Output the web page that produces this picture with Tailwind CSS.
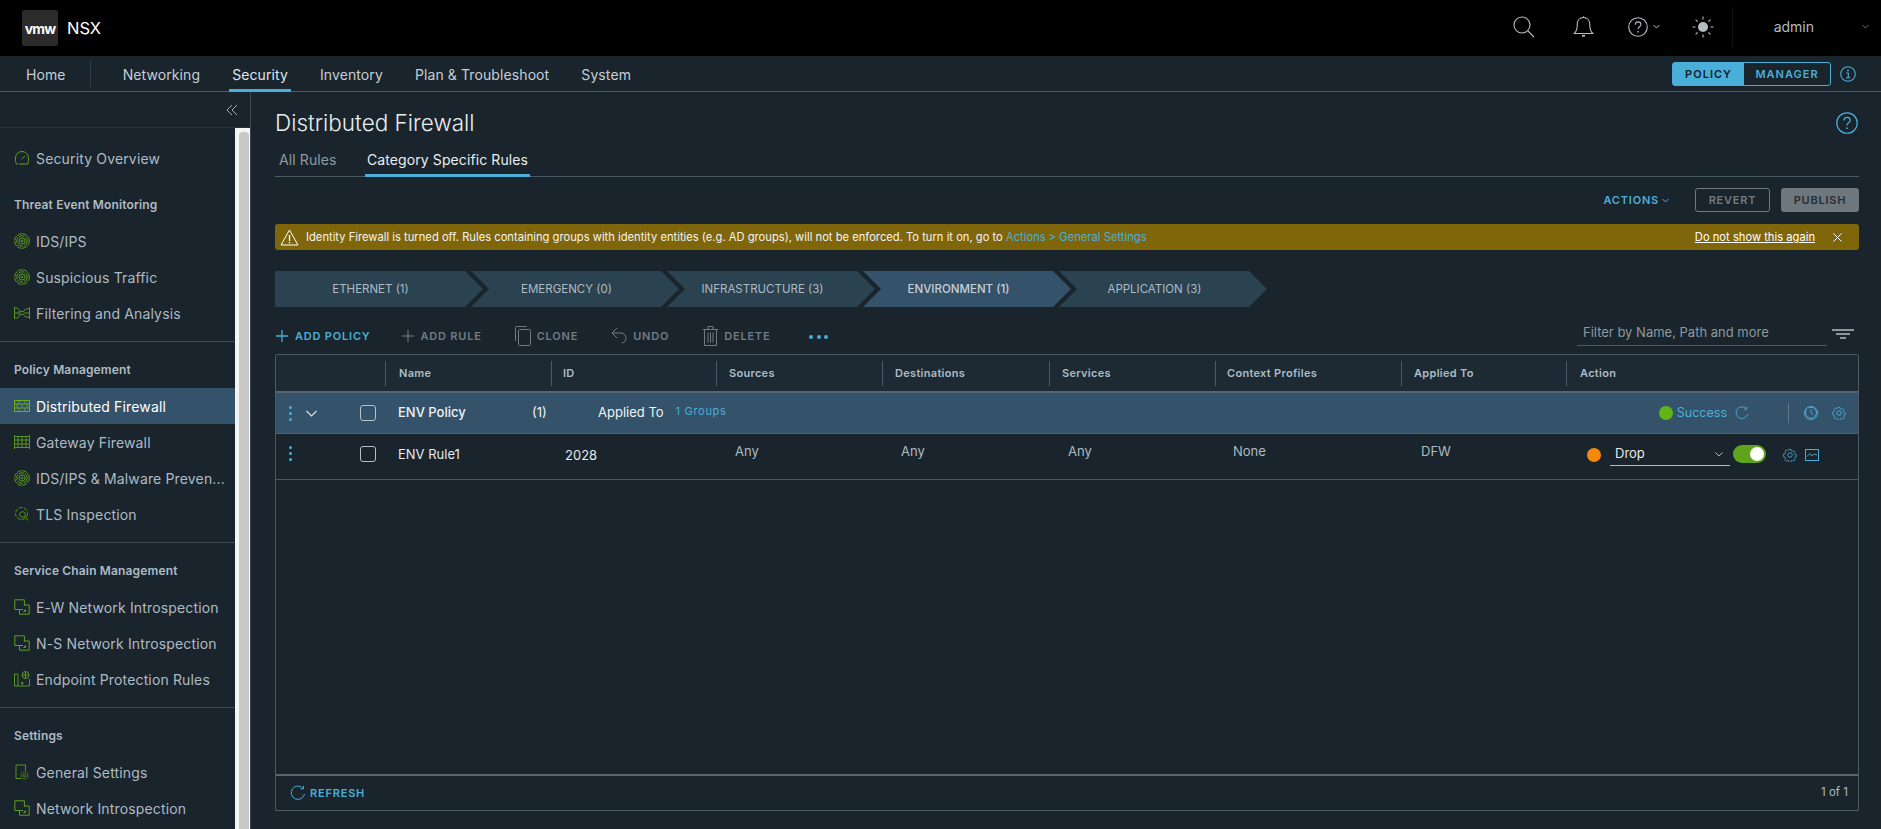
<!DOCTYPE html>
<html lang="en">
<head>
  <meta charset="UTF-8">
  <title>NSX - Distributed Firewall</title>
  <script src="https://cdn.jsdelivr.net/npm/@tailwindcss/browser@4"></script>
</head>
<body class="h-screen overflow-hidden bg-[#1a242c] text-[#adbbc4] [font-family:Inter,'Noto_Sans',sans-serif]">
  <!-- shared icons -->
  <svg class="hidden">
    <symbol id="intro" viewBox="0 0 16 16" fill="none" stroke="currentColor" stroke-width="1">
      <path d="M9 10.500H.8V.8h9.600v6"/><path d="M5.500 10.500v4.700h9.700V6H10.400"/><path d="M9.500 12.500l2-2M11.500 10.500v2h-2" stroke-width=".9"/>
    </symbol>
    <symbol id="rings" viewBox="0 0 16 16" fill="none" stroke="currentColor" stroke-width="1">
      <circle cx="8" cy="8" r="7.300" stroke-dasharray="5 .8"/><circle cx="8" cy="8" r="5.200" stroke-dasharray="6 .8"/><circle cx="8" cy="8" r="3.100"/><circle cx="8" cy="8" r="1"/>
    </symbol>
    <symbol id="gear" viewBox="0 0 16 16" fill="none" stroke="currentColor" stroke-width="1">
      <path d="M6.700.8h2.600l.4 2 1.300.6 1.800-1 1.800 1.900-1 1.700.5 1.300 2 .5v2.500l-2 .5-.5 1.300 1 1.700-1.800 1.900-1.800-1-1.300.6-.4 2H6.700l-.4-2-1.300-.6-1.800 1-1.800-1.900 1-1.700-.5-1.300-2-.5V6.800l2-.5.5-1.300-1-1.700L3.200 1.400l1.800 1 1.300-.6z" transform="translate(.8 .8) scale(.9)"/><circle cx="8" cy="8" r="2.600"/>
    </symbol>
    <symbol id="help" viewBox="0 0 20 20" fill="none" stroke="currentColor" stroke-width="1.100">
      <circle cx="10" cy="10" r="9.300"/><path d="M7.300 7.700c0-1.700 1.200-2.800 2.800-2.800s2.800 1 2.800 2.500c0 2.400-2.900 2.300-2.900 4.800"/><path d="M10 14v1.400" stroke-width="1.400"/>
    </symbol>
    <symbol id="refresh" viewBox="0 0 16 16" fill="none" stroke="currentColor" stroke-width="1">
      <path d="M14.500 9a6.700 6.700 0 1 1-1.800-6"/><path d="M13.500.8v3h-3"/>
    </symbol>
  </svg>

  <!-- top header -->
  <header class="h-14 bg-black flex items-center">
    <div class="ml-[22px] w-9 h-9 rounded-[2px] bg-[#2b2b2b] flex items-center justify-center text-white font-bold text-[14px] tracking-[-0.8px]">vmw</div>
    <span class="ml-[9px] text-white text-[16.500px]">NSX</span>
    <div class="ml-auto -mt-[3px] flex items-center text-[#b4bcc0]">
      <svg class="w-[22px] h-[22px]" viewBox="0 0 22 22" fill="none" stroke="currentColor" stroke-width="1.100"><circle cx="9" cy="9" r="8"/><path d="M15 15l6 6"/></svg>
      <svg class="ml-[38px] w-[21px] h-[22px]" viewBox="0 0 21 22" fill="none" stroke="currentColor" stroke-width="1.100"><path d="M10.500 1.500c-4 0-6.200 3-6.200 7 0 5-1 7-3 9h18.400c-2-2-3-4-3-9 0-4-2.200-7-6.200-7z"/><path d="M10.500.3v1.200"/><path d="M9 19.800h3" stroke-width="1.800"/></svg>
      <svg class="ml-[34px] w-5 h-5"><use href="#help"/></svg>
      <svg class="ml-[5px] w-[7px] h-[5px]" viewBox="0 0 7 5" fill="none" stroke="currentColor"><path d="M.5 1l3 3 3-3"/></svg>
      <svg class="ml-[32px] w-[22px] h-[22px]" viewBox="0 0 22 22" fill="currentColor" stroke="currentColor" stroke-width="1.100"><circle cx="11" cy="11" r="5" stroke="none"/><path d="M11 .5v3M11 18.500v3M.5 11h3M18.500 11h3M3.600 3.600l2 2M16.400 16.400l2 2M3.600 18.400l2-2M16.400 5.600l2-2"/></svg>
      <div class="ml-[18px] w-px h-10 bg-[#141414]"></div>
      <span class="ml-[41px] text-[14px] text-[#b4bcc0]">admin</span>
      <svg class="ml-[48px] mr-[12px] w-[7px] h-[5px] text-[#6a6f73]" viewBox="0 0 7 5" fill="none" stroke="currentColor"><path d="M.5 1l3 3 3-3"/></svg>
    </div>
  </header>

  <!-- main nav -->
  <nav class="h-9 flex items-stretch border-b border-[#4b5b65] text-[14px] tracking-[0.1px] text-[#c5cfd5]">
    <a class="pl-[26px] pt-px flex items-center">Home</a>
    <div class="ml-[24px] mr-[32px] my-[4px] w-px bg-[#2f3e48]"></div>
    <div class="flex gap-8">
      <a class="pt-px flex items-center">Networking</a>
      <a class="pt-px flex items-center text-[#dfe6ea] relative">Security<span class="absolute -left-[3px] -right-[3px] -bottom-px h-[3px] bg-[#49afd9]"></span></a>
      <a class="pt-px flex items-center">Inventory</a>
      <a class="pt-px flex items-center">Plan &amp; Troubleshoot</a>
      <a class="pt-px flex items-center">System</a>
    </div>
    <div class="ml-auto pt-px flex items-center pr-[25px]">
      <div class="flex h-6 rounded-[3px] border border-[#49afd9] text-[11px] font-semibold tracking-[1px]">
        <span class="w-[71px] bg-[#49afd9] text-[#10202a] flex items-center justify-center">POLICY</span>
        <span class="w-[86px] text-[#49afd9] flex items-center justify-center">MANAGER</span>
      </div>
      <svg class="ml-[9px] w-4 h-4 text-[#49afd9]" viewBox="0 0 16 16" fill="none" stroke="currentColor" stroke-width="1.100"><circle cx="8" cy="8" r="7.300"/><path d="M6.300 7h2v4.500M6 11.800h4.200"/><circle cx="8" cy="4.500" r=".9" fill="currentColor" stroke="none"/></svg>
    </div>
  </nav>

  <div class="flex h-[calc(100vh-92px)]">
    <!-- sidebar -->
    <aside class="w-[251px] shrink-0 border-r border-[#3a4852] flex flex-col text-[14px] tracking-[0.15px]">
      <div class="h-9 flex items-center justify-end pr-[12px] border-b border-[#27343c] shrink-0">
        <svg class="w-3 h-3 text-[#9fadb6]" viewBox="0 0 12 12" fill="none" stroke="currentColor"><path d="M6 1L1 6l5 5M11 1L6 6l5 5"/></svg>
      </div>
      <div class="flex flex-1 min-h-0">
        <div class="w-[235px] overflow-hidden">
          <a class="mt-[12px] h-9 flex items-center gap-[7px] pl-[15px]">
            <svg class="w-[14px] h-[14px] text-[#5fa01f]" viewBox="0 0 14 14" fill="none" stroke="currentColor"><path d="M3 13H1.500A6.500 6.500 0 0 1 .5 7a6.500 6.500 0 0 1 13 0 6.500 6.500 0 0 1-1 6H4"/><path d="M6.500 8L10 5"/></svg>
            Security Overview</a>
          <h3 class="mt-[20px] h-[17px] pl-[14px] text-[12px] font-semibold flex items-center">Threat Event Monitoring</h3>
          <a class="mt-[10px] h-9 flex items-center gap-[6px] pl-[14px]"><svg class="w-4 h-4 text-[#5fa01f]"><use href="#rings"/></svg>IDS/IPS</a>
          <a class="h-9 flex items-center gap-[6px] pl-[14px]"><svg class="w-4 h-4 text-[#5fa01f]"><use href="#rings"/></svg>Suspicious Traffic</a>
          <a class="h-9 flex items-center gap-[6px] pl-[14px]">
            <svg class="w-4 h-4 text-[#5fa01f]" viewBox="0 0 16 16" fill="none" stroke="currentColor" stroke-width=".9"><path d="M.5 2v12M15.500 2v12M.5 3h3l3 3.500h3l2-2.500h4M.5 13h3l3-3.500h3l2 2.500h4M.5 8h3l1.500-1.500L6.500 8 5 9.500 3.500 8M9.500 8h6"/></svg>Filtering and Analysis</a>
          <div class="mt-[10px] border-t border-[#3a4852]"></div>
          <h3 class="mt-[19px] h-[17px] pl-[14px] text-[12px] font-semibold flex items-center">Policy Management</h3>
          <a class="mt-[10px] h-9 flex items-center gap-[6px] pl-[14px] bg-[#34526a] text-white">
            <svg class="w-4 h-4 text-[#6fae24]" viewBox="0 0 16 16" fill="none" stroke="currentColor"><rect x=".5" y="2.500" width="15" height="11"/><path d="M.5 6h15M.5 10h15M5 2.500V6M11 2.500V6M8 6v4M3 6v4M13 6v4M5 10v3.500M11 10v3.500" stroke-width=".8"/></svg>Distributed Firewall</a>
          <a class="h-9 flex items-center gap-[6px] pl-[14px]">
            <svg class="w-4 h-4 text-[#5fa01f]" viewBox="0 0 16 16" fill="none" stroke="currentColor"><path d="M.5 1v14M15.500 1v14M.5 2.500h15M.5 13.500h15M.5 6h15M.5 10h15M4 2.500v11M8 2.500v11M12 2.500v11" stroke-width=".9"/></svg>Gateway Firewall</a>
          <a class="h-9 flex items-center gap-[6px] pl-[14px]"><svg class="w-4 h-4 text-[#5fa01f]"><use href="#rings"/></svg><span class="whitespace-nowrap">IDS/IPS &amp; Malware Preven...</span></a>
          <a class="h-9 flex items-center gap-[6px] pl-[14px]">
            <svg class="w-4 h-4 text-[#5fa01f]" viewBox="0 0 16 16" fill="none" stroke="currentColor" stroke-width=".9"><circle cx="7.500" cy="7.500" r="6" stroke-dasharray="4 1"/><circle cx="8.500" cy="8.500" r="2.800"/><path d="M10.500 10.500l4 4"/></svg>TLS Inspection</a>
          <div class="mt-[10px] border-t border-[#3a4852]"></div>
          <h3 class="mt-[19px] h-[17px] pl-[14px] text-[12px] font-semibold flex items-center">Service Chain Management</h3>
          <a class="mt-[10px] h-9 flex items-center gap-[6px] pl-[14px]"><svg class="w-4 h-4 text-[#5fa01f]"><use href="#intro"/></svg>E-W Network Introspection</a>
          <a class="h-9 flex items-center gap-[6px] pl-[14px]"><svg class="w-4 h-4 text-[#5fa01f]"><use href="#intro"/></svg>N-S Network Introspection</a>
          <a class="h-9 flex items-center gap-[6px] pl-[14px]">
            <svg class="w-4 h-4 text-[#5fa01f]" viewBox="0 0 16 16" fill="none" stroke="currentColor" stroke-width=".9"><path d="M3.500 3H.5v12h15V8M4 3v12M7.500 11.500h1.500v1.500h-1.500z"/><circle cx="11.500" cy="4" r="3.500"/><path d="M8 4h7M11.500.5v7"/></svg>Endpoint Protection Rules</a>
          <div class="mt-[10px] border-t border-[#3a4852]"></div>
          <h3 class="mt-[19px] h-[17px] pl-[14px] text-[12px] font-semibold flex items-center">Settings</h3>
          <a class="mt-[10px] h-9 flex items-center gap-[6px] pl-[14px]">
            <svg class="w-4 h-4 text-[#5fa01f]" viewBox="0 0 16 16" fill="none" stroke="currentColor" stroke-width=".9"><path d="M7 14.500H2V1h9.500v6"/><circle cx="10.500" cy="11.500" r="3.500" stroke-dasharray="1.500 .6"/><circle cx="10.500" cy="11.500" r="1.200"/></svg>General Settings</a>
          <a class="h-9 flex items-center gap-[6px] pl-[14px]"><svg class="w-4 h-4 text-[#5fa01f]"><use href="#intro"/></svg>Network Introspection</a>
        </div>
        <!-- scrollbar -->
        <div class="w-[15px] bg-[#f4f4f4] pl-[4px] pr-px pt-[4px]"><div class="h-full rounded-t-[4px] bg-[#c8c8c8]"></div></div>
      </div>
    </aside>

    <!-- page content -->
    <main class="flex-1 min-w-0 pl-[24px] pr-[22px] flex flex-col">
      <div class="h-[60px] flex items-center justify-between">
        <h1 class="text-[22.500px] font-light text-[#e9eef0] mt-[1px]">Distributed Firewall</h1>
        <svg class="w-[22px] h-[22px] text-[#49afd9] mr-px mt-px"><use href="#help"/></svg>
      </div>
      <div class="h-[25px] flex border-b border-[#4b5b65] text-[14px] tracking-[0.1px] items-start">
        <a class="w-[90px] pl-[4px] h-[25px] pb-[10px] flex items-center text-[#8d9ba3]">All Rules</a>
        <a class="w-[165px] h-[25px] pb-[7px] flex items-center justify-center text-[#e9eef0] border-b-[3px] border-[#49afd9]">Category Specific Rules</a>
      </div>
      <div class="mt-[11px] h-6 flex items-center justify-end text-[11px] tracking-[0.8px] font-semibold">
        <span class="text-[#49afd9] flex items-center gap-[3px] mr-[26px]">ACTIONS<svg class="w-[7px] h-[5px]" viewBox="0 0 7 5" fill="none" stroke="currentColor"><path d="M.5 1l3 3 3-3"/></svg></span>
        <span class="w-[75px] h-6 rounded-[3px] border border-[#6d7a82] text-[#6f7c84] flex items-center justify-center">REVERT</span>
        <span class="ml-[11px] w-[78px] h-6 rounded-[3px] bg-[#6e777c] text-[#242f37] flex items-center justify-center">PUBLISH</span>
      </div>
      <div class="mt-[12px] h-[26px] rounded-[3px] bg-[#80660a] flex items-center text-[11.200px] text-[#f3f3f3] pl-[5px] pr-[17px] pt-px">
        <svg class="w-[19px] h-[17px] mr-[7px]" viewBox="0 0 19 17" fill="none" stroke="white" stroke-width="1"><path d="M9.500 1L18 16H1z"/><path d="M9.500 6v6" stroke-width="1.300"/><path d="M9.500 13v1.300" stroke-width="1.300"/></svg>
        <span>Identity Firewall is turned off. Rules containing groups with identity entities (e.g. AD groups), will not be enforced. To turn it on, go to <span class="text-[#49afd9]">Actions &gt; General Settings</span></span>
        <span class="ml-auto underline text-white">Do not show this again</span>
        <svg class="ml-[18px] w-[9px] h-[9px]" viewBox="0 0 9 9" stroke="white" fill="none"><path d="M.5.500l8 8M8.500.500l-8 8"/></svg>
      </div>

      <!-- category stepper -->
      <div class="mt-[21px] flex h-9 text-[11.500px] text-[#adbbc4]">
        <div class="w-[208px] shrink-0 pr-[17px] pt-[2px] flex items-center justify-center bg-[#2b4250] [clip-path:polygon(0_0,190px_0,100%_50%,190px_100%,0_100%)]">ETHERNET (1)</div>
        <div class="w-[208px] shrink-0 -ml-[12px] pr-[17px] pt-[2px] flex items-center justify-center bg-[#2b4250] [clip-path:polygon(0_0,190px_0,100%_50%,190px_100%,0_100%,18px_50%)]">EMERGENCY (0)</div>
        <div class="w-[208px] shrink-0 -ml-[12px] pr-[17px] pt-[2px] flex items-center justify-center bg-[#2b4250] [clip-path:polygon(0_0,190px_0,100%_50%,190px_100%,0_100%,18px_50%)]">INFRASTRUCTURE (3)</div>
        <div class="w-[208px] shrink-0 -ml-[12px] pr-[17px] pt-[2px] flex items-center justify-center bg-[#34526a] font-medium text-[#c5d0d6] [clip-path:polygon(0_0,190px_0,100%_50%,190px_100%,0_100%,18px_50%)]">ENVIRONMENT (1)</div>
        <div class="w-[208px] shrink-0 -ml-[12px] pr-[17px] pt-[2px] flex items-center justify-center bg-[#2b4250] [clip-path:polygon(0_0,190px_0,100%_50%,190px_100%,0_100%,18px_50%)]">APPLICATION (3)</div>
      </div>

      <!-- toolbar -->
      <div class="mt-[13px] h-[32px] flex items-center text-[11px] font-semibold tracking-[0.8px] text-[#6f7c84]">
        <svg class="ml-px w-3 h-3 text-[#49afd9]" viewBox="0 0 12 12" stroke="currentColor" stroke-width="1.300"><path d="M6 0v12M0 6h12"/></svg>
        <span class="ml-[7px] text-[#49afd9]">ADD POLICY</span>
        <svg class="ml-[32px] w-3 h-3" viewBox="0 0 12 12" stroke="currentColor" stroke-width="1.100"><path d="M6 0v12M0 6h12"/></svg>
        <span class="ml-[6px]">ADD RULE</span>
        <svg class="ml-[33px] w-[16px] h-[20px]" viewBox="0 0 16 20" fill="none" stroke="currentColor"><rect x="3.500" y="3.500" width="12" height="16" rx="1"/><path d="M.5 15V1.500a1 1 0 0 1 1-1h10"/></svg>
        <span class="ml-[6px]">CLONE</span>
        <svg class="ml-[33px] w-[16px] h-[18px]" viewBox="0 0 16 18" fill="none" stroke="currentColor"><path d="M6 1L1 6l5 5"/><path d="M1 6h9a5 5 0 0 1 5 5 5 5 0 0 1-4 5"/></svg>
        <span class="ml-[6px]">UNDO</span>
        <svg class="ml-[34px] w-[15px] h-[20px]" viewBox="0 0 15 20" fill="none" stroke="currentColor"><path d="M0 3.500h15M5 3.500v-3h5v3M1.500 3.500v16h12v-16M5 6.500v10M7.500 6.500v10M10 6.500v10"/></svg>
        <span class="ml-[6px]">DELETE</span>
        <span class="ml-[39px] flex gap-[3.500px] mt-[2px]"><i class="w-[4px] h-[4px] rounded-full bg-[#49afd9]"></i><i class="w-[4px] h-[4px] rounded-full bg-[#49afd9]"></i><i class="w-[4px] h-[4px] rounded-full bg-[#49afd9]"></i></span>
        <div class="ml-auto w-[250px] h-[26px] -mt-[7px] mr-[5px] border-b border-[#4b5b65] pl-[6px] pt-[2px] flex items-center text-[13px] font-normal tracking-normal text-[#8c9aa0]">Filter by Name, Path and more</div>
        <svg class="w-[22px] h-[10px] -mt-[5px] mr-[5px] text-[#b4bcc0]" viewBox="0 0 22 10" stroke="currentColor" stroke-width="1.400"><path d="M0 1h22M4 5h14M8 9h6"/></svg>
      </div>

      <!-- rules grid -->
      <div class="mt-[2px] h-[457px] border border-[#4b5b65] rounded-t-[2px] flex flex-col text-[13px]">
        <div class="h-[36px] bg-[#1d2a33] grid grid-cols-[109px_166px_165px_166px_167px_166px_186px_165px_1fr] items-center text-[11px] font-semibold tracking-[0.3px] shrink-0">
          <div class="h-[25px]"></div>
          <div class="h-[25px] border-l border-[#4b5b65] pl-[13px] flex items-center">Name</div>
          <div class="h-[25px] border-l border-[#4b5b65] pl-[11px] flex items-center">ID</div>
          <div class="h-[25px] border-l border-[#4b5b65] pl-[12px] flex items-center">Sources</div>
          <div class="h-[25px] border-l border-[#4b5b65] pl-[12px] flex items-center">Destinations</div>
          <div class="h-[25px] border-l border-[#4b5b65] pl-[12px] flex items-center">Services</div>
          <div class="h-[25px] border-l border-[#4b5b65] pl-[11px] flex items-center">Context Profiles</div>
          <div class="h-[25px] border-l border-[#4b5b65] pl-[12px] flex items-center">Applied To</div>
          <div class="h-[25px] border-l border-[#4b5b65] pl-[13px] flex items-center">Action</div>
        </div>
        <div class="h-[43px] shrink-0 border-t-2 border-b border-t-[#566570] border-b-[#4f6573] bg-[#34526a] flex items-center text-[#eef2f4]">
          <span class="ml-[13px] flex flex-col gap-[3px]"><i class="w-[3px] h-[3px] rounded-full bg-[#49afd9]"></i><i class="w-[3px] h-[3px] rounded-full bg-[#49afd9]"></i><i class="w-[3px] h-[3px] rounded-full bg-[#49afd9]"></i></span>
          <svg class="ml-[14px] w-[11px] h-[7px]" viewBox="0 0 11 7" fill="none" stroke="#dbe3e7" stroke-width="1.100"><path d="M.5 1l5 5 5-5"/></svg>
          <span class="ml-[43px] w-4 h-4 rounded-[3px] border border-[#b7c2c8]"></span>
          <span class="ml-[22px] w-[134px] font-medium">ENV Policy</span>
          <span class="w-[66px]">(1)</span>
          <span>Applied To</span>
          <span class="ml-[12px] text-[11px] text-[#49afd9] tracking-[0.7px] -mt-[3px]">1 Groups</span>
          <span class="ml-auto w-[14px] h-[14px] rounded-full bg-[#60b515]"></span>
          <span class="ml-[4px] text-[12.500px] text-[#49afd9]">Success</span>
          <svg class="ml-[8px] w-[14px] h-[14px] text-[#49afd9]"><use href="#refresh"/></svg>
          <div class="ml-[39px] w-px h-[20px] bg-[#5e7989]"></div>
          <svg class="ml-[15px] w-[14px] h-[14px] text-[#49afd9]" viewBox="0 0 14 14" fill="none" stroke="currentColor"><circle cx="7" cy="7" r="6.500"/><path d="M2.500 3.500a5.500 5.500 0 1 0 2-1.700M7 3.500V7l2.500 2" stroke-width=".9"/></svg>
          <svg class="ml-[14px] mr-[12px] w-[14px] h-[14px] text-[#49afd9]"><use href="#gear"/></svg>
        </div>
        <div class="h-[46px] shrink-0 border-b border-[#4b5b65] grid grid-cols-[109px_166px_165px_166px_167px_166px_186px_165px_1fr] items-center text-[#d5dde1]">
          <div class="flex items-center -translate-y-[3px]">
            <span class="ml-[13px] flex flex-col gap-[3px]"><i class="w-[3px] h-[3px] rounded-full bg-[#49afd9]"></i><i class="w-[3px] h-[3px] rounded-full bg-[#49afd9]"></i><i class="w-[3px] h-[3px] rounded-full bg-[#49afd9]"></i></span>
            <span class="ml-[68px] w-4 h-4 rounded-[3px] border border-[#b7c2c8]"></span>
          </div>
          <div class="pl-[13px] -translate-y-[2px] text-[#e4eaed]">ENV Rule1</div>
          <div class="pl-[14px] -translate-y-[1px] text-[#e4eaed]">2028</div>
          <div class="pl-[19px] -translate-y-[5px] text-[#adbbc4]">Any</div>
          <div class="pl-[19px] -translate-y-[5px] text-[#adbbc4]">Any</div>
          <div class="pl-[19px] -translate-y-[5px] text-[#adbbc4]">Any</div>
          <div class="pl-[18px] -translate-y-[5px] text-[#adbbc4]">None</div>
          <div class="pl-[20px] -translate-y-[5px] text-[#adbbc4]">DFW</div>
          <div class="flex items-center -translate-y-[2px]">
            <span class="ml-[21px] w-[14px] h-[14px] rounded-full bg-[#f58a0a]"></span>
            <div class="ml-[9px] w-[120px] h-[22px] border-b border-[#adbbc4] pl-[5px] pr-[7px] flex items-center justify-between text-[#e4eaed]">Drop<svg class="w-[8px] h-[5px]" viewBox="0 0 8 5" fill="none" stroke="#adbbc4"><path d="M.5.500L4 4 7.500.500"/></svg></div>
            <span class="ml-[3px] w-[33px] h-[18px] rounded-full bg-[#5ea51b] flex items-center justify-end pr-[2px] -mt-[2px]"><i class="w-[14px] h-[14px] rounded-full bg-white"></i></span>
            <svg class="ml-[17px] w-[14px] h-[14px] text-[#49afd9]"><use href="#gear"/></svg>
            <svg class="ml-[8px] w-[14px] h-[12px] text-[#49afd9]" viewBox="0 0 14 12" fill="none" stroke="currentColor"><rect x=".5" y=".5" width="13" height="11"/><path d="M2 7.500l3-3 2 2.500 2-2 3 1" stroke-width=".9"/></svg>
          </div>
        </div>
        <div class="flex-1"></div>
        <div class="h-[36px] shrink-0 border-t-2 border-[#566570] flex items-center justify-between pl-[14px] pr-[10px]">
          <span class="flex items-center gap-[4px] text-[11px] font-semibold tracking-[0.8px] text-[#49afd9]"><svg class="w-4 h-4"><use href="#refresh"/></svg>REFRESH</span>
          <span class="text-[11.500px]">1 of 1</span>
        </div>
      </div>
    </main>
  </div>
</body>
</html>
